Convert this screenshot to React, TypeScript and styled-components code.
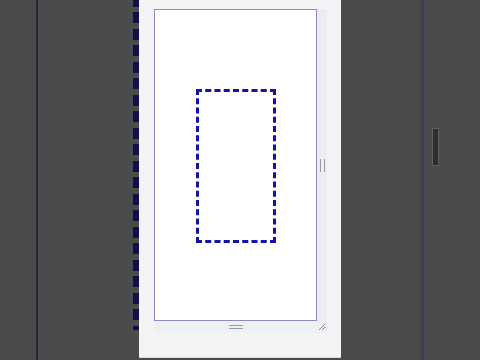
import React from "react";
import styled, { createGlobalStyle } from "styled-components";

const Global = createGlobalStyle`
  html, body { margin: 0; padding: 0; background: #4b4b4b; font-family: "Liberation Sans", Arial, sans-serif; }
  #root { height: 360px; }
`;

const Stage = styled.div`
  display: flex;
  width: 480px;
  height: 360px;
  background: #4b4b4b;
  overflow: hidden;
`;

const Gap = styled.div<{ $w: number }>`
  width: ${(p) => p.$w}px;
  flex: none;
`;

const Rule = styled.div<{ $w: number; $c: string }>`
  width: ${(p) => p.$w}px;
  flex: none;
  background: ${(p) => p.$c};
`;

const DashStrip = styled.div`
  width: 6px;
  flex: none;
  height: 330px;
  background: repeating-linear-gradient(
    to bottom,
    #10104e 0px,
    #10104e 11px,
    transparent 11px,
    transparent 16.5px
  );
  background-position: 0 -4px;
`;

const Panel = styled.div`
  width: 202px;
  flex: none;
  background: #f4f4f6;
  display: grid;
  grid-template-columns: 15px 163px 10px 14px;
  grid-template-rows: 9px 312px 12px 1fr;
  border-bottom: 1px solid #dcdce0;
  box-sizing: border-box;
  height: 358px;
`;

const Frame = styled.div`
  grid-column: 2;
  grid-row: 2;
  box-sizing: border-box;
  border: 1px solid #8c8cc4;
  background: #ffffff;
  display: flex;
  align-items: flex-start;
  justify-content: center;
  padding-top: 79px;
`;

const DashedBox = styled.div`
  width: 80px;
  height: 154px;
  box-sizing: border-box;
  border: 3px dashed #1212a8;
`;

const SideLane = styled.div`
  grid-column: 3;
  grid-row: 2;
  background: #ececf1;
  display: flex;
  align-items: center;
  justify-content: center;
`;

const VGrip = styled.div`
  width: 3px;
  height: 13px;
  border-left: 1px solid #9a9aa4;
  border-right: 1px solid #9a9aa4;
  margin-top: 1px;
`;

const BottomLane = styled.div`
  grid-column: 2;
  grid-row: 3;
  background: #eef0f3;
  display: flex;
  justify-content: center;
  align-items: center;
`;

const HGrip = styled.div`
  width: 14px;
  height: 2px;
  border-top: 1px solid #9a9aa4;
  border-bottom: 1px solid #9a9aa4;
`;

const Corner = styled.div`
  grid-column: 3;
  grid-row: 3;
  background: #eef0f3;
  display: flex;
  align-items: center;
  justify-content: center;
`;

const RightArea = styled.div`
  flex: 1;
  padding-left: 8px;
  padding-top: 128px;
  box-sizing: border-box;
`;

const Handle = styled.div`
  width: 5px;
  height: 36px;
  background: #2e2e2e;
  border: 1px solid #5e5e5e;
`;

export default function App() {
  return (
    <>
      <Global />
      <Stage>
        <Gap $w={36} />
        <Rule $w={2} $c="#26263a" />
        <Gap $w={95} />
        <DashStrip />
        <Panel>
          <Frame>
            <DashedBox />
          </Frame>
          <SideLane>
            <VGrip />
          </SideLane>
          <BottomLane>
            <HGrip />
          </BottomLane>
          <Corner>
            <svg width="8" height="8" viewBox="0 0 8 8">
              <path d="M7 1 L1 7 M7 4 L4 7" stroke="#8a8a90" strokeWidth="1" fill="none" />
            </svg>
          </Corner>
        </Panel>
        <Gap $w={80} />
        <Rule $w={3} $c="#3c3c5c" />
        <RightArea>
          <Handle />
        </RightArea>
      </Stage>
    </>
  );
}
